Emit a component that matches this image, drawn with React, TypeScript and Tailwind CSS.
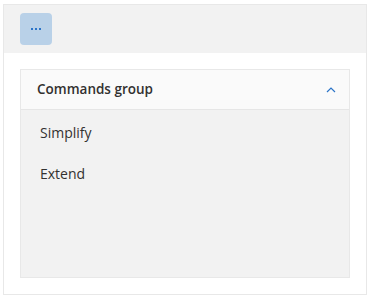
import React from "react";

const items = ["Simplify", "Extend"];

const App = () => {
  return (
    <div className="w-[372px] h-[301px] bg-white pt-[4px] pl-[3px] font-['Open_Sans','Noto_Sans',sans-serif] text-[#323130]">
      <div className="flex flex-col w-[364px] h-[291px] border border-[#e8e8e8] bg-white">
        {/* toolbar */}
        <div className="flex items-start h-[48px] px-4 pt-2 bg-[#f2f2f2]">
          <button className="flex items-center justify-center w-8 h-8 rounded-[4px] bg-[#b9d1e8]">
            <span className="flex gap-[2px]">
              <span className="w-[2px] h-[2px] bg-[#2b74c8]"></span>
              <span className="w-[2px] h-[2px] bg-[#2b74c8]"></span>
              <span className="w-[2px] h-[2px] bg-[#2b74c8]"></span>
            </span>
          </button>
        </div>

        {/* accordion */}
        <div className="flex-1 p-4">
          <div className="flex flex-col h-full border border-[#e8e8e8] bg-[#f2f2f2]">
            <div className="flex items-center justify-between h-[40px] pl-4 pr-[13px] bg-[#fafafa] border-b border-[#e6e6e6]">
              <span className="text-[13.5px] font-semibold">Commands group</span>
              <svg width="10" height="6" viewBox="0 0 10 6" fill="none">
                <path d="M1 5 L5 1 L9 5" stroke="#2b74c8" strokeWidth="1.2" />
              </svg>
            </div>
            <div className="flex flex-col pt-[2px]">
              {items.map((item) => (
                <div key={item} className="flex items-center h-[41px] px-[19px] text-[14px]">
                  {item}
                </div>
              ))}
            </div>
          </div>
        </div>
      </div>
    </div>
  );
};

export default App;
